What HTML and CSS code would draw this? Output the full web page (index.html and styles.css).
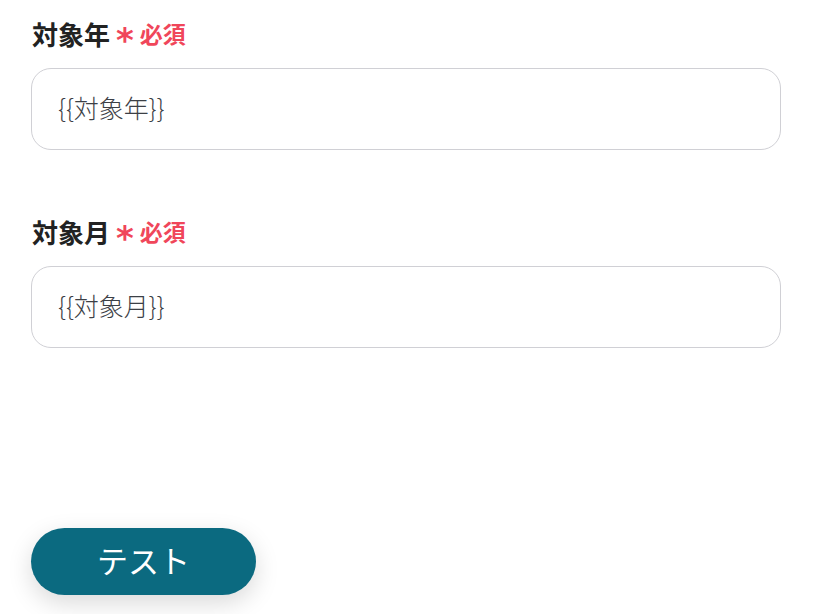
FILE: index.html
```html
<!DOCTYPE html>
<html lang="ja">
<head>
<meta charset="utf-8">
<link rel="stylesheet" href="styles.css">
</head>
<body>
<div class="form">
  <div class="field">
    <div class="label"><span class="name">対象年</span><span class="ast">*</span><span class="req">必須</span></div>
    <div class="input">{{対象年}}</div>
  </div>
  <div class="field">
    <div class="label"><span class="name">対象月</span><span class="ast">*</span><span class="req">必須</span></div>
    <div class="input">{{対象月}}</div>
  </div>
</div>
<div class="footer">
  <button class="btn">テスト</button>
</div>
</body>
</html>
```
FILE: styles.css
```css
html, body {
  margin: 0;
  padding: 0;
  background: #ffffff;
  font-family: "Noto Sans CJK JP", "Noto Sans", sans-serif;
}
.form {
  padding: 14px 43px 0 31px;
  display: flex;
  flex-direction: column;
  gap: 62px;
}
.field {
  display: flex;
  flex-direction: column;
  gap: 16px;
}
.label {
  display: flex;
  align-items: center;
  height: 38px;
  padding-left: 1px;
}
.name {
  font-size: 26px;
  font-weight: 700;
  color: #222222;
}
.ast {
  color: #f0465a;
  font-size: 34px;
  font-weight: 700;
  margin-left: 6px;
  margin-top: 14px;
  font-family: "DejaVu Sans", sans-serif;
}
.req {
  color: #f0465a;
  font-size: 23px;
  font-weight: 700;
  margin-left: 6px;
}
.input {
  box-sizing: border-box;
  height: 82px;
  border: 1px solid #d0d0d5;
  border-radius: 20px;
  display: flex;
  align-items: center;
  padding-left: 26px;
  padding-bottom: 5px;
  font-size: 25px;
  font-weight: 300;
  color: #3c4046;
}
.footer {
  position: absolute;
  left: 31px;
  top: 528px;
}
.btn {
  width: 225px;
  height: 67px;
  border: none;
  border-radius: 34px;
  background: #0b6a80;
  color: #ffffff;
  font-family: "Noto Sans CJK JP", sans-serif;
  font-size: 31px;
  padding: 0 0 4px 0;
  box-shadow: 0 8px 24px rgba(0, 0, 0, 0.15);
}
```
